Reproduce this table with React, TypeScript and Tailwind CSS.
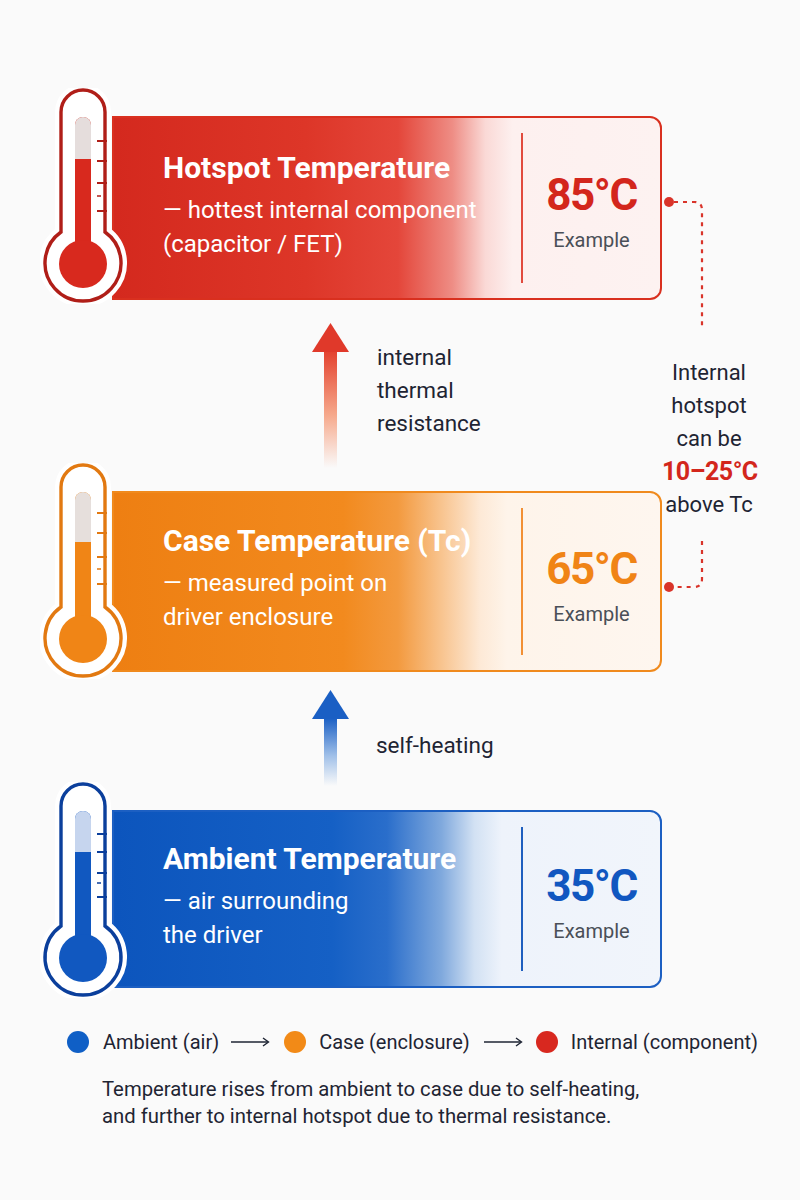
import React from "react";

type Tone = {
  outline: string;
  fill: string;
  gray: string;
  grayEnd: number;
  ticks: number[];
  shortTick: number;
  cardH: string;
  card: string;
  divider: string;
  num: string;
};

const tones: Record<"red" | "orange" | "blue", Tone> = {
  red: {
    outline: "#b01e18",
    fill: "#d8291e",
    gray: "#e5dddc",
    grayEnd: 71,
    ticks: [53, 73, 95, 123],
    shortTick: 108,
    cardH: "h-[184px]",
    card: "border-[#d9301f] bg-[linear-gradient(90deg,#d4291e_0%,#dd3628_35%,#e4463a_52%,#ee8d85_62%,#fad9d6_68%,#fdf0ef_73%,#fdf2f1_100%)]",
    divider: "bg-[#e14b3e]",
    num: "text-[#d3261c]",
  },
  orange: {
    outline: "#e27911",
    fill: "#f08516",
    gray: "#e6dfdc",
    grayEnd: 79,
    ticks: [50, 70, 94, 121],
    shortTick: 106,
    cardH: "h-[181px]",
    card: "border-[#f08a1d] bg-[linear-gradient(90deg,#ee7f12_0%,#f28a1e_42%,#f39a3f_52%,#f8c48f_60%,#fde9d6_67%,#fef4ea_72%,#fef6ef_100%)]",
    divider: "bg-[#f29035]",
    num: "text-[#f08416]",
  },
  blue: {
    outline: "#0b3f9c",
    fill: "#1158c0",
    gray: "#c6d5ee",
    grayEnd: 70,
    ticks: [52, 70, 91, 115],
    shortTick: 101,
    cardH: "h-[178px]",
    card: "border-[#1c5fc2] bg-[linear-gradient(90deg,#0c55bd_0%,#1560c5_40%,#2a6ecb_50%,#80a9dd_60%,#d2e1f3_66%,#eef3fb_71%,#f1f5fb_100%)]",
    divider: "bg-[#1f5fbf]",
    num: "text-[#1157c0]",
  },
};

function Thermometer({ tone }: { tone: Tone }) {
  const outline = "M21 144 L21 24 A22 22 0 0 1 65 24 L65 144 A38 38 0 1 1 21 144 Z";
  return (
    <svg width="90" height="216" viewBox="0 0 90 216" className="relative z-10 shrink-0">
      <path d={outline} fill="#ffffff" stroke="#ffffff" strokeWidth="12" strokeLinejoin="round" />
      <path d={outline} fill="#ffffff" stroke={tone.outline} strokeWidth="3.4" />
      <rect x="35" y="29" width="16" height="140" rx="8" fill={tone.fill} />
      <path d={`M35 ${tone.grayEnd} L35 37 A8 8 0 0 1 51 37 L51 ${tone.grayEnd} Z`} fill={tone.gray} />
      <circle cx="43" cy="176" r="24" fill={tone.fill} />
      {tone.ticks.map((y) => (
        <line key={y} x1="57" y1={y} x2="67" y2={y} stroke={tone.outline} strokeWidth="2" />
      ))}
      <line x1="57" y1={tone.shortTick} x2="61" y2={tone.shortTick} stroke={tone.outline} strokeWidth="1.5" />
    </svg>
  );
}

function TempRow({
  tone,
  title,
  lines,
  value,
}: {
  tone: Tone;
  title: string;
  lines: string[];
  value: string;
}) {
  return (
    <div className="flex items-start">
      <Thermometer tone={tone} />
      <div
        className={`-ml-[18px] mt-[28px] flex w-[550px] ${tone.cardH} rounded-r-[12px] border-2 ${tone.card}`}
      >
        <div className="flex w-[407px] flex-col justify-center pb-[6px] pl-[49px] text-white">
          <div className="mb-[7px] text-[30px] font-bold leading-[36px]">{title}</div>
          {lines.map((l) => (
            <div key={l} className="whitespace-nowrap text-[24px] leading-[34px]">
              {l}
            </div>
          ))}
        </div>
        <div className={`my-[15px] w-[2px] ${tone.divider}`} />
        <div className="flex flex-1 flex-col items-center justify-center pt-[8px]">
          <div className={`text-[44px] font-bold leading-[46px] tracking-[-1.5px] ${tone.num}`}>{value}</div>
          <div className="mt-[10px] text-[20px] leading-[24px] text-[#4a4f57]">Example</div>
        </div>
      </div>
    </div>
  );
}

function UpArrow({ id, head, top, mid, height }: { id: string; head: string; top: string; mid: string; height: number }) {
  return (
    <svg width="40" height={height} viewBox={`0 0 40 ${height}`} className="shrink-0">
      <defs>
        <linearGradient id={id} x1="0" y1="0" x2="0" y2="1">
          <stop offset="0%" stopColor={top} />
          <stop offset="55%" stopColor={mid} />
          <stop offset="100%" stopColor={mid} stopOpacity="0" />
        </linearGradient>
      </defs>
      <rect x="13" y="28" width="13" height={height - 28} fill={`url(#${id})`} />
      <polygon points="19.5,0 38,29 1,29" fill={head} />
    </svg>
  );
}

function LongArrow() {
  return (
    <svg width="40" height="12" viewBox="0 0 40 12" className="shrink-0">
      <line x1="1" y1="6" x2="38" y2="6" stroke="#1e2433" strokeWidth="1.4" />
      <path d="M33 2 L38.5 6 L33 10" fill="none" stroke="#1e2433" strokeWidth="1.4" />
    </svg>
  );
}

export default function App() {
  return (
    <div className="h-[1200px] w-[800px] bg-[#fafafa] pl-[40px] pt-[88px] font-['Roboto',_'Liberation_Sans',_sans-serif] text-[#1e2433]">
      <div className="flex">
        {/* left: thermometers, cards, arrows */}
        <div className="w-[622px] shrink-0">
          <TempRow
            tone={tones.red}
            title="Hotspot Temperature"
            lines={["— hottest internal component", "(capacitor / FET)"]}
            value="85°C"
          />
          <div className="flex h-[159px] items-start">
            <div className="ml-[271px] mt-[19px]">
              <UpArrow id="ar-red" head="#e0392a" top="#e3412e" mid="#f6a98c" height={145} />
            </div>
            <div className="ml-[26px] mt-[37px] text-[22.5px] leading-[33px]">
              <div>internal</div>
              <div>thermal</div>
              <div>resistance</div>
            </div>
          </div>
          <TempRow
            tone={tones.orange}
            title="Case Temperature (Tc)"
            lines={["— measured point on", "driver enclosure"]}
            value="65°C"
          />
          <div className="flex h-[103px] items-start">
            <div className="ml-[271px] mt-[11px]">
              <UpArrow id="ar-blue" head="#1a5fc4" top="#1a5fc4" mid="#9fbfe8" height={96} />
            </div>
            <div className="ml-[25px] mt-[50px] text-[22.5px] leading-[33px]">self-heating</div>
          </div>
          <TempRow
            tone={tones.blue}
            title="Ambient Temperature"
            lines={["— air surrounding", "the driver"]}
            value="35°C"
          />
        </div>

        {/* right: hotspot annotation */}
        <div className="flex-1">
          <svg width="60" height="140" viewBox="0 0 60 140" className="mt-[107px] block">
            <circle cx="7" cy="7" r="5" fill="#d9342a" />
            <path d="M12 7 H32 Q40 7 40 15 V134" fill="none" stroke="#d9342a" strokeWidth="2.2" strokeDasharray="4 5" />
          </svg>
          <div className="mt-[21px] w-[94px] text-center text-[22px] leading-[33px]">
            <div>Internal</div>
            <div>hotspot</div>
            <div>can be</div>
            <div className="whitespace-nowrap text-[25px] font-bold tracking-[-0.5px] text-[#d3261c]">10–25°C</div>
            <div className="whitespace-nowrap">above Tc</div>
          </div>
          <svg width="60" height="57" viewBox="0 0 60 57" className="mt-[16px] block">
            <path d="M40 4 V42 Q40 50 32 50 H12" fill="none" stroke="#d9342a" strokeWidth="2.2" strokeDasharray="4 5" />
            <circle cx="7" cy="50" r="5" fill="#d9342a" />
          </svg>
        </div>
      </div>

      {/* legend */}
      <div className="ml-[27px] mt-[32px] flex h-[24px] items-center text-[20px] text-[#1e2433]">
        <span className="mr-[14px] h-[22px] w-[22px] rounded-full bg-[#0f5fc6]" />
        <span>Ambient (air)</span>
        <span className="ml-[11px] mr-[14px]">
          <LongArrow />
        </span>
        <span className="mr-[13px] h-[22px] w-[22px] rounded-full bg-[#f28a17]" />
        <span>Case (enclosure)</span>
        <span className="ml-[13px] mr-[13px]">
          <LongArrow />
        </span>
        <span className="mr-[13px] h-[22px] w-[22px] rounded-full bg-[#d8281f]" />
        <span>Internal (component)</span>
      </div>

      <div className="ml-[62px] mt-[22px] text-[20.3px] leading-[27px] text-[#1f2533]">
        <div>Temperature rises from ambient to case due to self-heating,</div>
        <div>and further to internal hotspot due to thermal resistance.</div>
      </div>
    </div>
  );
}
